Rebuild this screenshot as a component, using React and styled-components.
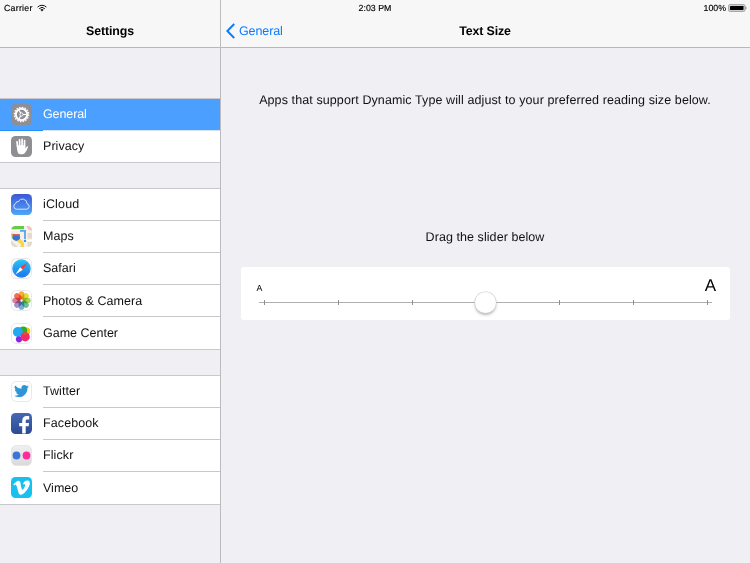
import React from "react";
import styled, { createGlobalStyle } from "styled-components";

const Global = createGlobalStyle`
  * { box-sizing: border-box; }
  body { margin: 0; background: #efeff4; font-family: "Liberation Sans", Arial, sans-serif; color: #111; text-rendering: geometricPrecision; }
`;

const Screen = styled.div`
  width: 750px;
  height: 563px;
  display: flex;
  flex-direction: column;
  overflow: hidden;
  position: relative;
`;
const StatusBar = styled.header`
  height: 15px;
  flex: none;
  display: grid;
  grid-template-columns: 1fr auto 1fr;
  align-items: center;
  padding: 1px 3px 0;
  background: #f7f7f7;
  font-size: 8.8px;
  line-height: 14px;
  color: #000;
`;
const StatusGroup = styled.div`
  display: flex;
  align-items: center;
  gap: ${(p) => p.$gap}px;
  padding-left: 1px;
  justify-content: ${(p) => p.$align || "flex-start"};
`;
const Status = styled.span`
  letter-spacing: ${(p) => p.$track || 0}px;
  white-space: nowrap;
  -webkit-text-stroke: 0.15px #000;
`;
const Columns = styled.div`
  flex: 1;
  display: grid;
  grid-template-columns: 220px 1fr;
`;
const Divider = styled.div`
  position: absolute;
  left: 220px;
  top: 0;
  bottom: 0;
  width: 1px;
  background: #bcbcbf;
`;
const NavBar = styled.div`
  height: 33px;
  display: grid;
  grid-template-columns: 1fr auto 1fr;
  align-items: center;
  background: #f7f7f7;
  border-bottom: 1px solid #b8b8bb;
`;
const Title = styled.h1`
  grid-column: 2;
  margin: 0;
  font-size: 12.4px;
  line-height: 32px;
  font-weight: bold;
  letter-spacing: -0.12px;
  color: #000;
`;
const Back = styled.a`
  display: flex;
  align-items: center;
  gap: 4px;
  padding-left: 6px;
  color: #0a7bff;
  font-size: 12.5px;
  letter-spacing: -0.1px;
`;
const Sidebar = styled.nav`
  display: flex;
  flex-direction: column;
`;
const Groups = styled.div`
  display: flex;
  flex-direction: column;
  gap: 25px;
  padding-top: 50px;
`;
const Group = styled.ul`
  margin: 0;
  padding: 0;
  list-style: none;
  background: #fff;
  border: solid #c9c8cd;
  border-width: 1px 0;
`;
const Row = styled.li`
  height: ${(p) => p.$height}px;
  display: flex;
  align-items: center;
  padding-left: 11px;
  gap: 11px;
  background: ${(p) => (p.$active ? "#4b9fff" : "#fff")};
  color: ${(p) => (p.$active ? "#fff" : "#111")};
  box-shadow: ${(p) => (p.$active ? "inset 0 -1px #2390f8" : "none")};
  & > svg {
    flex: none;
    margin-bottom: ${(p) => p.$lift}px;
  }
`;
const Label = styled.span`
  flex: 1;
  align-self: stretch;
  display: flex;
  align-items: center;
  padding-bottom: ${(p) => p.$lift}px;
  font-size: 12.5px;
  letter-spacing: ${(p) => p.$track}px;
  border-bottom: 1px solid ${(p) => (p.$last ? "transparent" : p.$active ? "#d3e2f5" : "#c9c8cd")};
`;
const Detail = styled.main`
  display: flex;
  flex-direction: column;
`;
const Hint = styled.p`
  margin: ${(p) => p.$top}px 0 0;
  text-align: center;
  font-size: 12.5px;
  line-height: 16px;
  letter-spacing: ${(p) => p.$track}px;
  white-space: nowrap;
`;
const SliderCard = styled.section`
  margin: 22px 20.5px 0 21px;
  height: 53px;
  border-radius: 3px;
  background: #fff;
  padding: 10px 13.5px 0 15.5px;
`;
const Sizes = styled.div`
  height: 17px;
  display: flex;
  justify-content: space-between;
  align-items: baseline;
  line-height: 17px;
  color: #000;
`;
const Letter = styled.span`
  font-size: ${(p) => p.$size}px;
`;
const Track = styled.div`
  position: relative;
  height: 5px;
  margin: 6px 4.5px 0 2.5px;
  padding: 0 4px 0 5px;
  display: flex;
  justify-content: space-between;
  background: linear-gradient(#b0b0b0, #b0b0b0) 0 2px / 100% 1px no-repeat;
`;
const Tick = styled.i`
  width: 1px;
  height: 5px;
  background: #8f8f8f;
`;
const Thumb = styled.span`
  position: absolute;
  left: 50%;
  top: 50%;
  width: 21px;
  height: 21px;
  margin: -11px 0 0 -10.5px;
  border-radius: 50%;
  background: #fff;
  box-shadow: 0 0 0 0.5px #cfcfcf, 0 2px 3px rgba(0, 0, 0, 0.3);
`;
const Petal = styled.rect`
  mix-blend-mode: multiply;
`;

const Tile = ({ fill, border, children }) => (
  <svg width="21" height="21" viewBox="0 0 21 21">
    <rect x={border ? 0.5 : 0} y={border ? 0.5 : 0} width={border ? 20 : 21} height={border ? 20 : 21} rx="4.5" fill={fill} stroke={border ? "#e3e3e3" : "none"} strokeWidth="0.8" />
    {children}
  </svg>
);

const GearIcon = () => (
  <Tile fill="#8e8e93">
    <g fill="none" stroke="#fff">
      <circle cx="10.5" cy="10.5" r="7.2" strokeWidth="1.3" strokeDasharray="1.6 1.23" />
      <circle cx="10.5" cy="10.5" r="5.7" strokeWidth="2" />
      <circle cx="10.5" cy="10.5" r="1.6" strokeWidth="1" />
      <path d="M12.1 10.5h3.4M9.7 9.1 8 6.2M9.7 11.9 8 14.8" strokeWidth="1.1" />
    </g>
  </Tile>
);
const HandIcon = () => (
  <Tile fill="#8e8e93">
    <g stroke="#fff" strokeWidth="1.7" strokeLinecap="round" fill="none">
      <path d="M6.6 11 6 5.8M8.8 10 8.5 3.9M11.1 10V3.4M13.4 11l.2-6.4" />
    </g>
    <path d="M5.8 9.3h8.5v3.2c.5-.6 1-1.5 1.5-2 .5-.5 1.4-.3 1.2.5-.5 1.3-1.5 4-2.8 5.5-.8 1-1.6 1.7-2.6 1.7H9.2c-1.4 0-2.3-1.1-2.6-2.5-.5-1.5-.8-4.2-.8-6.4z" fill="#fff" />
  </Tile>
);
const CloudIcon = () => (
  <Tile fill="url(#cloudBg)">
    <defs><linearGradient id="cloudBg" x2="0" y2="1"><stop stopColor="#3c58d5" /><stop offset="1" stopColor="#4fa6fa" /></linearGradient></defs>
    <path d="M5.3 15.2a2.9 2.9 0 0 1-.6-5.6 2.3 2.3 0 0 1 2.9-1.9 4.4 4.4 0 0 1 8.4 2 2.8 2.8 0 0 1-.3 5.5z" fill="none" stroke="#e8f2ff" strokeWidth="0.9" />
  </Tile>
);
const MapsIcon = () => (
  <svg width="21" height="21" viewBox="0 0 21 21">
    <clipPath id="mapClip"><rect width="21" height="21" rx="4.5" /></clipPath>
    <g clipPath="url(#mapClip)">
      <path fill="#f6f1e9" d="M0 0h21v21H0z" />
      <path fill="#63cd45" d="M1 0h12v3.6H0z" />
      <path fill="#f7bfc5" d="M16 0h5v4.6c-3 0-5-2-5-4.6z" />
      <path fill="#e4dac9" d="M16.6 7H21v5.5h-4.4zM16.6 16H21v5h-4.4zM0 14.5l7 6.5H0z" />
      <path fill="#ffd43c" d="M0 7.5h3L13 16.3V21h-3.2V18L0 11z" />
      <path fill="#fff" d="M0 3.6h14v1.2H0zM13 14h8v1h-8z" />
      <path d="M9 4.8h5V15" fill="none" stroke="#5aa5ef" strokeWidth="1.8" />
      <path d="M1.6 8.4h7.2c-.8 1.3.9 2.5.2 4-.5 1.2-2.2 1.7-3.8 2.5-1.6-.8-3.3-1.3-3.8-2.5-.5-1.5 1-2.7.2-4z" fill="#3277d2" />
      <path d="M1.6 8.2h7.2v1.9H1.6z" fill="#ed4a43" />
      <circle cx="14" cy="15" r="2" fill="#fff" /><circle cx="14" cy="15" r="1.3" fill="#3b91ec" />
    </g>
  </svg>
);
const SafariIcon = () => (
  <Tile fill="#fafafa" border>
    <defs><linearGradient id="safBg" x2="0" y2="1"><stop stopColor="#25c5f8" /><stop offset="1" stopColor="#1c72ea" /></linearGradient></defs>
    <circle cx="10.5" cy="10.5" r="9.2" fill="url(#safBg)" />
    <circle cx="10.5" cy="10.5" r="7.9" fill="none" stroke="#a7dcff" strokeWidth="0.8" strokeDasharray="0.3 0.9" opacity="0.6" />
    <path d="M16.6 4.4 11.8 11.8 9.2 9.2z" fill="#f63d36" />
    <path d="M4.4 16.6 11.8 11.8 9.2 9.2z" fill="#fff" />
  </Tile>
);
const petals = ["#f99b10", "#dfd510", "#93c83d", "#48b584", "#559fd8", "#937abd", "#cf6596", "#f04e33"];
const PhotosIcon = () => (
  <Tile fill="#fff" border>
    {petals.map((c, i) => (
      <Petal key={c} x="7.7" y="1.3" width="5.6" height="8.2" rx="2.8" fill={c} opacity="0.82" transform={`rotate(${i * 45} 10.5 10.5)`} />
    ))}
  </Tile>
);
const GameIcon = () => (
  <Tile fill="#fff" border>
    <circle cx="15.7" cy="8.1" r="3.6" fill="#f7c710" />
    <circle cx="12.2" cy="7.4" r="4" fill="#35ac22" />
    <circle cx="6.9" cy="9" r="5" fill="#24a8f2" />
    <circle cx="8" cy="16.3" r="3.1" fill="#8726e8" />
    <circle cx="14.2" cy="13.8" r="4.6" fill="#f5286d" />
    <path d="M10.5 11a4.6 4.6 0 0 1 7.4 0c-2.2 1-5.2 1-7.4 0z" fill="#e8502a" />
  </Tile>
);
const TwitterIcon = () => (
  <Tile fill="#fff" border>
    <path transform="translate(3.1 2.6) scale(.62)" fill="#2e96d5" d="M23.95 4.57a10 10 0 0 1-2.82.77 4.96 4.96 0 0 0 2.16-2.72c-.95.55-2 .95-3.13 1.18a4.92 4.92 0 0 0-8.38 4.48A13.93 13.93 0 0 1 1.64 3.16a4.92 4.92 0 0 0 1.52 6.57 4.9 4.9 0 0 1-2.23-.61v.06a4.92 4.92 0 0 0 3.95 4.83 4.96 4.96 0 0 1-2.21.08 4.94 4.94 0 0 0 4.6 3.42A9.87 9.87 0 0 1 0 19.54a13.94 13.94 0 0 0 7.55 2.21c9.05 0 14-7.5 14-13.98 0-.21 0-.42-.02-.63a9.94 9.94 0 0 0 2.46-2.55z" />
  </Tile>
);
const FacebookIcon = () => (
  <Tile fill="url(#fbBg)">
    <defs><linearGradient id="fbBg" x2="0" y2="1"><stop stopColor="#4668b4" /><stop offset="1" stopColor="#2c4a93" /></linearGradient></defs>
    <path d="M11.2 20.6v-7.4H8.2V10h3V8c0-3 1.8-4.9 4.6-4.9 1.1 0 2 .1 2.4.2v3.1h-1.6c-1.5 0-1.9.6-1.9 1.7V10h3.4l-.5 3.2h-2.9v7.4z" fill="#fff" />
  </Tile>
);
const FlickrIcon = () => (
  <Tile fill="url(#flBg)" border>
    <defs><linearGradient id="flBg" x2="0" y2="1"><stop stopColor="#f0f0f0" /><stop offset="1" stopColor="#d9d9d9" /></linearGradient></defs>
    <circle cx="5.5" cy="10.5" r="3.9" fill="#3c75d8" /><circle cx="15.5" cy="10.5" r="3.9" fill="#ff2d9b" />
  </Tile>
);
const VimeoIcon = () => (
  <Tile fill="#17c0ee">
    <path transform="translate(2.3 2.4) scale(.69)" fill="#fff" d="M23.98 6.42c-.11 2.34-1.74 5.54-4.89 9.6C15.84 20.23 13.09 22.35 10.84 22.35c-1.39 0-2.57-1.29-3.53-3.86L5.39 11.42C4.67 8.84 3.9 7.56 3.08 7.56c-.18 0-.81.38-1.88 1.13L.07 7.24c1.19-1.04 2.35-2.08 3.5-3.13C5.14 2.75 6.33 2.03 7.12 1.96c1.87-.18 3.02 1.1 3.45 3.84.47 2.95.79 4.79.97 5.51.54 2.45 1.13 3.68 1.78 3.68.5 0 1.26-.8 2.27-2.39 1-1.59 1.54-2.8 1.61-3.63.14-1.37-.4-2.06-1.61-2.06-.57 0-1.16.13-1.77.39 1.18-3.85 3.42-5.72 6.74-5.61 2.46.07 3.61 1.66 3.42 4.73z" />
  </Tile>
);
const WifiIcon = () => (
  <svg width="10" height="8" viewBox="0 0 10 8" fill="none" stroke="#111" strokeWidth="1">
    <path d="M.6 3.1a6.2 6.2 0 0 1 8.8 0M2.2 4.7a4 4 0 0 1 5.6 0" />
    <path d="M5 7.4 3.4 5.8a2.3 2.3 0 0 1 3.2 0z" fill="#111" stroke="none" />
  </svg>
);
const BatteryIcon = () => (
  <svg width="19" height="8" viewBox="0 0 19 8">
    <rect x=".5" y=".5" width="16.5" height="7" rx="1.6" fill="#cfcfcf" stroke="#999" strokeWidth=".8" />
    <rect x="2" y="2" width="13.5" height="4" rx=".4" fill="#000" />
    <path d="M17.5 2.5c1.3.3 1.3 2.7 0 3z" fill="#777" />
  </svg>
);
const BackIcon = () => (
  <svg width="9" height="16" viewBox="0 0 9 16" fill="none" stroke="#0a7bff" strokeWidth="2"><path d="M8.2 1 1.3 8l6.9 7" /></svg>
);

// Each row: label, icon, letter spacing, icon lift, label lift.
const groups = [
  { height: 31.5, rows: [["General", GearIcon, -0.1, 0, 0], ["Privacy", HandIcon, 0.05, 0, 0]] },
  {
    height: 32,
    rows: [
      ["iCloud", CloudIcon, 0.15, 1, 1],
      ["Maps", MapsIcon, 0.1, 1, 1],
      ["Safari", SafariIcon, 0, 1, 1],
      ["Photos & Camera", PhotosIcon, 0.03, 1, 0],
      ["Game Center", GameIcon, 0, 0, 0],
    ],
  },
  {
    height: 32,
    rows: [
      ["Twitter", TwitterIcon, 0.05, 1, 1],
      ["Facebook", FacebookIcon, 0.1, 1, 1],
      ["Flickr", FlickrIcon, 0.1, 1, 1],
      ["Vimeo", VimeoIcon, 0, 1, 0],
    ],
  },
];

export default function App() {
  return (
    <Screen>
      <Global />
      <StatusBar>
        <StatusGroup $gap={4}><Status $track={0.25}>Carrier</Status><WifiIcon /></StatusGroup>
        <Status>2:03 PM</Status>
        <StatusGroup $gap={2} $align="flex-end"><Status>100%</Status><BatteryIcon /></StatusGroup>
      </StatusBar>
      <Columns>
        <Sidebar>
          <NavBar><Title>Settings</Title></NavBar>
          <Groups>
            {groups.map((g) => (
              <Group key={g.rows[0][0]}>
                {g.rows.map(([name, Icon, track, iconLift, labelLift], i) => (
                  <Row key={name} $height={g.height} $lift={iconLift} $active={name === "General"}>
                    <Icon />
                    <Label $track={track} $lift={labelLift} $active={name === "General"} $last={i === g.rows.length - 1}>{name}</Label>
                  </Row>
                ))}
              </Group>
            ))}
          </Groups>
        </Sidebar>
        <Detail>
          <NavBar><Back><BackIcon />General</Back><Title>Text Size</Title></NavBar>
          <Hint $top={44} $track={0.1}>Apps that support Dynamic Type will adjust to your preferred reading size below.</Hint>
          <Hint $top={121} $track={0.07}>Drag the slider below</Hint>
          <SliderCard>
            <Sizes><Letter $size={8.8}>A</Letter><Letter $size={17}>A</Letter></Sizes>
            <Track>
              {[0, 1, 2, 3, 4, 5, 6].map((n) => <Tick key={n} />)}
              <Thumb />
            </Track>
          </SliderCard>
        </Detail>
      </Columns>
      <Divider />
    </Screen>
  );
}
